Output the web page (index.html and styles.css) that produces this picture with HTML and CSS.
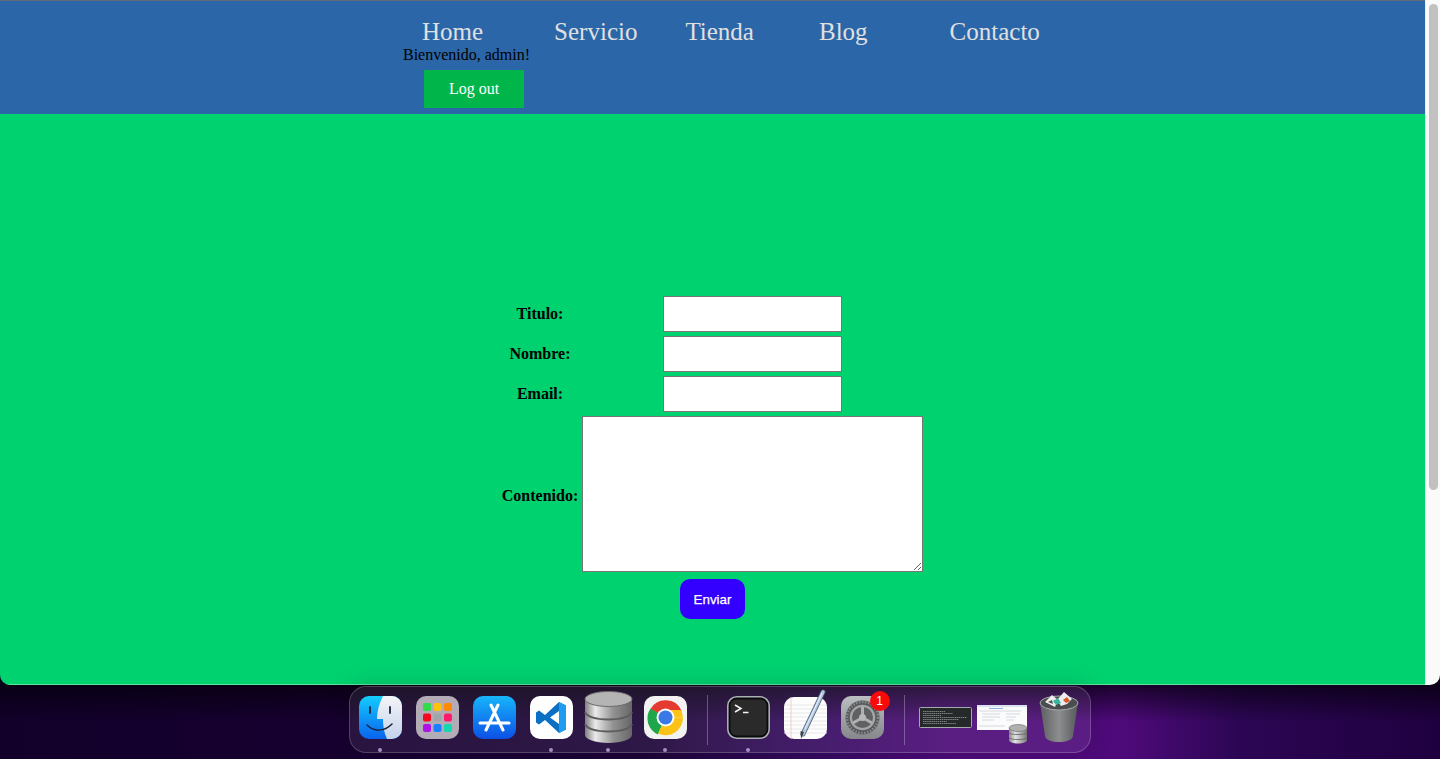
FILE: index.html
```html
<!DOCTYPE html>
<html lang="es">
<head>
<meta charset="utf-8">
<title>Contacto</title>
<link rel="stylesheet" href="styles.css">
</head>
<body>
<div class="window">
  <div class="page">
    <header class="site-header">
      <nav class="nav">
        <a class="nav-link nav-home" href="#">Home</a>
        <a class="nav-link nav-servicio" href="#">Servicio</a>
        <a class="nav-link nav-tienda" href="#">Tienda</a>
        <a class="nav-link nav-blog" href="#">Blog</a>
        <a class="nav-link nav-contacto" href="#">Contacto</a>
      </nav>
      <div class="user">
        <div class="welcome">Bienvenido, admin!</div>
        <a class="logout" href="#">Log out</a>
      </div>
    </header>
    <main class="content">
      <form class="entry-form">
        <table class="form-table">
          <tr><th>Titulo:</th><td><input class="field" type="text"></td></tr>
          <tr><th>Nombre:</th><td><input class="field" type="text"></td></tr>
          <tr><th>Email:</th><td><input class="field" type="text"></td></tr>
          <tr><th class="area-label">Contenido:</th><td><textarea class="area"></textarea></td></tr>
        </table>
        <button class="send" type="button">Enviar</button>
      </form>
    </main>
  </div>
  <div class="scrollbar"><div class="thumb"></div></div>
</div>

<div class="dock">
  <div class="app running">
    <svg viewBox="0 0 43 43" width="43" height="43">
      <defs>
        <linearGradient id="fa" x1="0" y1="0" x2="0" y2="1"><stop offset="0" stop-color="#14cdfd"/><stop offset="1" stop-color="#0a62ee"/></linearGradient>
        <linearGradient id="fb" x1="0" y1="0" x2="0" y2="1"><stop offset="0" stop-color="#f4f5f7"/><stop offset="1" stop-color="#c5d3ea"/></linearGradient>
      </defs>
      <rect width="43" height="43" rx="10" fill="url(#fa)"/>
      <path d="M24 0h9a10 10 0 0 1 10 10v23a10 10 0 0 1-10 10H28c-3-6-4-13-4-20h-6c0-8 2-15 6-23z" fill="url(#fb)"/>
      <path d="M11 11v6M31 11v6" stroke="#17233f" stroke-width="1.800" stroke-linecap="round"/>
      <path d="M8 29c7 7 17 7 25-1" fill="none" stroke="#17233f" stroke-width="1.500" stroke-linecap="round"/>
    </svg>
  </div>
  <div class="app">
    <svg viewBox="0 0 43 43" width="43" height="43">
      <rect width="43" height="43" rx="10" fill="#b3abb6"/>
      <rect x="7" y="7" width="8" height="8" rx="2" fill="#2fdc4a"/><rect x="17.500" y="7" width="8" height="8" rx="2" fill="#ffc30b"/><rect x="28" y="7" width="8" height="8" rx="2" fill="#ff8a00"/>
      <rect x="7" y="17.500" width="8" height="8" rx="2" fill="#f8081c"/><rect x="17.500" y="17.500" width="8" height="8" rx="2" fill="#a3a6a6"/><rect x="28" y="17.500" width="8" height="8" rx="2" fill="#ff1a6d"/>
      <rect x="7" y="28" width="8" height="8" rx="2" fill="#b010e8"/><rect x="17.500" y="28" width="8" height="8" rx="2" fill="#1a80ff"/><rect x="28" y="28" width="8" height="8" rx="2" fill="#10d8b0"/>
    </svg>
  </div>
  <div class="app">
    <svg viewBox="0 0 43 43" width="43" height="43">
      <defs><linearGradient id="as" x1="0" y1="0" x2="0" y2="1"><stop offset="0" stop-color="#17b5fb"/><stop offset="1" stop-color="#0c50e6"/></linearGradient></defs>
      <rect width="43" height="43" rx="10" fill="url(#as)"/>
      <path d="M25 9 13 34M18 9l12 25M7 27h29" fill="none" stroke="#fff" stroke-width="3" stroke-linecap="round"/>
    </svg>
  </div>
  <div class="app running">
    <svg viewBox="0 0 43 43" width="43" height="43">
      <rect width="43" height="43" rx="10" fill="#fff"/>
      <path d="M29 6 36 9.500V33.500L29 37 15 24 9 28.500 6 26.500V16.500L9 14.500l6 4.500zM29 15 20 21.500 29 28z" fill="#0b6fc4" fill-rule="evenodd"/>
      <path d="M29 6 36 9.500V33.500L29 37z" fill="#1f9cf0"/>
    </svg>
  </div>
  <div class="app app-db running">
    <svg viewBox="0 0 49 52" width="49" height="52">
      <defs>
        <linearGradient id="db" x1="0" y1="0" x2="1" y2="0"><stop offset="0" stop-color="#808080"/><stop offset=".22" stop-color="#eaeaea"/><stop offset=".6" stop-color="#929292"/><stop offset="1" stop-color="#666"/></linearGradient>
      </defs>
      <path d="M1 8v36c0 4 10 8 23.500 8S48 48 48 44V8z" fill="url(#db)"/>
      <ellipse cx="24.500" cy="8" rx="23.500" ry="7.500" fill="#b4b4b4" stroke="#6a6a6a"/>
      <path d="M1 21c2 5 12 7.500 23.500 7.500S46 26 48 21M1 33c2 5 12 7.500 23.500 7.500S46 38 48 33" fill="none" stroke="#5e5e5e" stroke-width="2"/>
    </svg>
  </div>
  <div class="app running">
    <svg viewBox="0 0 43 43" width="43" height="43">
      <rect width="43" height="43" rx="10" fill="#f3f2f2"/>
      <path d="M21.500 21.500 6.500 13a17.500 17.500 0 0 1 31 1.500z" fill="#e53a30"/>
      <path d="M21.500 21.500 14 38.500A17.500 17.500 0 0 1 6.500 12.500z" fill="#1fa64a"/>
      <path d="M21.500 21.500H39A17.500 17.500 0 0 1 14 37.500z" fill="#fcc316"/>
      <path d="M21.500 14H37.400L39 21.500H28z" fill="#fcc316"/>
      <circle cx="21.500" cy="21.500" r="9" fill="#fff"/>
      <circle cx="21.500" cy="21.500" r="7" fill="#3b78e7"/>
    </svg>
  </div>
  <div class="separator"></div>
  <div class="app running">
    <svg viewBox="0 0 43 43" width="43" height="43">
      <rect x=".8" y=".8" width="41.400" height="41.400" rx="9" fill="#0b0b0b" stroke="#a9b0b2" stroke-width="1.600"/>
      <rect x="3.500" y="3.500" width="36" height="36" rx="6" fill="#2a2a2a"/>
      <path d="M8 9l6 3.500-6 3.500M16 16.500h5.500" fill="none" stroke="#f4f4f4" stroke-width="1.500"/>
    </svg>
  </div>
  <div class="app">
    <svg viewBox="0 0 43 43" width="43" height="43">
      <rect y="1" width="43" height="42" rx="10" fill="#fdfdfd"/>
      <path d="M0 9h43M0 13h43M0 17h43M0 21h43M0 25h43M0 29h43M0 33h43M0 37h43" stroke="#e4e2e2" stroke-width=".8"/>
      <path d="M7 1v42" stroke="#f3c2be" stroke-width=".8"/>
      <path d="M39-4 19 38" stroke="#55677c" stroke-width="5" stroke-linecap="round"/>
      <path d="M39-4 19 38" stroke="#b3c8e2" stroke-width="3.200" stroke-linecap="round"/>
      <path d="M38-3 21 33" stroke="#eef3f9" stroke-width="1"/>
      <path d="M20 36 17 43l-.500-8z" fill="#3a4048"/>
    </svg>
  </div>
  <div class="app app-prefs">
    <svg viewBox="0 0 43 43" width="43" height="43">
      <defs><linearGradient id="sp" x1="0" y1="0" x2="0" y2="1"><stop offset="0" stop-color="#bbbfc2"/><stop offset="1" stop-color="#85878a"/></linearGradient></defs>
      <rect width="43" height="43" rx="10" fill="url(#sp)"/>
      <circle cx="21.500" cy="21.500" r="17" fill="#56585a"/>
      <circle cx="21.500" cy="21.500" r="15.500" fill="none" stroke="#898b8d" stroke-width="2.500" stroke-dasharray="1.500 1.500"/>
      <circle cx="21.500" cy="21.500" r="12.800" fill="#a4a6a8"/>
      <circle cx="21.500" cy="21.500" r="10.500" fill="#5f6163"/>
      <path d="M21.500 21.500V11M21.500 21.500l9.500 5.500M21.500 21.500 12 27" stroke="#aeb0b2" stroke-width="3"/>
      <circle cx="21.500" cy="21.500" r="3.500" fill="#b6b8ba"/>
    </svg>
    <span class="badge">1</span>
  </div>
  <div class="separator separator-two"></div>
  <div class="thumb-term">
    <svg viewBox="0 0 53 21" width="53" height="21">
      <rect x=".5" y=".5" width="52" height="20" rx="1" fill="#26292a" stroke="#a4aaaa"/>
      <path d="M4 4.500h22M4 6.500h30M4 8.500h18M4 10.500h44M4 12.500h36M4 14.500h24M4 16.500h33" stroke="#959c98" stroke-width=".8" stroke-dasharray="1.500 .6"/>
    </svg>
  </div>
  <div class="thumb-app">
    <svg viewBox="0 0 52 39" width="52" height="39">
      <defs><linearGradient id="mdb" x1="0" y1="0" x2="1" y2="0"><stop offset="0" stop-color="#8a8a8a"/><stop offset=".35" stop-color="#e4e4e4"/><stop offset="1" stop-color="#777"/></linearGradient></defs>
      <rect y="0" width="50" height="25" fill="#fbfbfb"/>
      <rect y="0" width="50" height="2" fill="#d8e2f0"/>
      <path d="M12 3.500h14" stroke="#8fb4e4" stroke-width="1"/>
      <path d="M2 6h42M5 9h18M29 9h14M5 12h18M29 12h10M5 15h12M29 15h8M2 21h26" stroke="#d0d6de" stroke-width=".9"/>
      <path d="M32 23v12c0 2 4 3.500 9 3.500s9-1.500 9-3.500V23z" fill="url(#mdb)"/>
      <ellipse cx="41" cy="23" rx="9" ry="3.500" fill="#b0b0b0" stroke="#6a6a6a" stroke-width=".6"/>
      <path d="M32 28c2 2 16 2 18 0M32 33c2 2 16 2 18 0" fill="none" stroke="#5f5f5f" stroke-width=".8"/>
    </svg>
  </div>
  <div class="trash">
    <svg viewBox="0 0 40 50" width="40" height="50">
      <defs><linearGradient id="tr" x1="0" y1="0" x2="1" y2="0"><stop offset="0" stop-color="#5c5e60"/><stop offset=".5" stop-color="#8c8e90"/><stop offset="1" stop-color="#55585a"/></linearGradient></defs>
      <path d="M1 11 6 44c.500 4 7 6 14 6s13.500-2 14-6L39 11z" fill="url(#tr)"/>
      <ellipse cx="20" cy="11" rx="19" ry="7" fill="#4a4c4e" stroke="#a8aaac"/>
      <path d="M6 10 13 3l6 5-3 7zM18 8l7-8 8 7-5 5-6 2z" fill="#ececec"/>
      <path d="M14 9l5-3 3 5-5 2z" fill="#3bb59a"/>
      <path d="M24 8l4-3 3 4-4 2z" fill="#d8582e"/>
      <path d="M9 10l4-2 1 4z" fill="#555"/>
    </svg>
  </div>
</div>
</body>
</html>
```

FILE: styles.css
```css
* { box-sizing: border-box; }

html, body {
  margin: 0;
  height: 759px;
  overflow: hidden;
}

body {
  display: flex;
  flex-direction: column;
  align-items: center;
  font-family: "Liberation Serif", serif;
  background:
    linear-gradient(180deg, rgba(5, 0, 12, 0.7) 685px, rgba(5, 0, 12, 0) 722px),
    linear-gradient(90deg, #12002a 0%, #170030 24%, #1d0538 45%, #340a5e 56%, #4c0b78 66%, #4e0a7a 78%, #2c0654 86%, #1f003f 100%);
}

.window {
  flex: none;
  align-self: stretch;
  display: flex;
  height: 685px;
  border-radius: 0 0 10px 10px;
  overflow: hidden;
}

.page {
  flex: 1;
  display: flex;
  flex-direction: column;
  min-width: 0;
  background: #00d270;
  border-bottom: 1px solid #5fe39f;
}

.site-header {
  flex: none;
  height: 114px;
  padding: 17px 0 0 403px;
  background: #2a66a8;
  border-top: 1px solid #5f6a76;
}

.nav {
  display: flex;
  height: 28px;
}

.nav-link {
  font-size: 25px;
  line-height: 28px;
  color: #e0e0e0;
  text-decoration: none;
}

.nav-home { margin-left: 19px; }
.nav-servicio { margin-left: 71px; }
.nav-tienda { margin-left: 48px; }
.nav-blog { margin-left: 65px; }
.nav-contacto { margin-left: 82px; }

.welcome {
  font-size: 16px;
  line-height: 18px;
  color: #000;
}

.logout {
  display: block;
  width: 100px;
  height: 38px;
  margin: 6px 0 0 21px;
  background: #00b64b;
  color: #fff;
  font-size: 16px;
  line-height: 38px;
  text-align: center;
  text-decoration: none;
}

.content {
  flex: 1;
  padding-top: 178px;
}

.entry-form {
  display: flex;
  flex-direction: column;
  align-items: center;
}

.form-table {
  border-collapse: separate;
  border-spacing: 4px;
}

.form-table th {
  padding: 0;
  font-size: 16px;
  font-weight: bold;
  color: #000;
  text-align: center;
  vertical-align: middle;
}

.form-table .area-label { padding-top: 4px; }

.form-table td {
  padding: 0;
  text-align: center;
  vertical-align: middle;
}

.field {
  display: block;
  width: 179px;
  height: 36px;
  margin: 0 auto;
  background: #fff;
  border: 1px solid #767676;
  border-radius: 0;
}

.area {
  display: block;
  width: 341px;
  height: 156px;
  margin: 0;
  background: #fff;
  border: 1px solid #767676;
  border-radius: 0;
}

.send {
  width: 65px;
  height: 40px;
  margin-top: 3px;
  padding: 0;
  border: 0;
  border-radius: 10px;
  background: #3300ff;
  color: #fff;
  font-family: "Liberation Sans", sans-serif;
  font-size: 13.330px;
  -webkit-text-stroke: 0.25px #fff;
}

.scrollbar {
  flex: none;
  width: 15px;
  padding: 4px 3px;
  background: #fafafa;
  border-left: 1px solid #ececec;
}

.thumb {
  width: 9px;
  height: 486px;
  border-radius: 5px;
  background: #c1c1c1;
}

.dock {
  flex: none;
  display: flex;
  align-items: flex-start;
  width: 742px;
  height: 67px;
  margin: 1px 1px 0 0;
  padding: 9px 0 0 9px;
  border: 1px solid rgba(255, 255, 255, 0.2);
  border-radius: 17px;
  background: rgba(255, 255, 255, 0.08);
  box-shadow: 0 -2px 24px rgba(0, 0, 0, 0.14);
}

.app {
  flex: none;
  position: relative;
  width: 43px;
  height: 43px;
  margin-right: 14px;
}

.app svg { display: block; overflow: visible; }

.app-db {
  width: 49px;
  height: 52px;
  margin: -5px 11px 0 -3px;
}

.running::after {
  content: "";
  position: absolute;
  left: 50%;
  top: 52px;
  width: 4px;
  height: 4px;
  margin-left: -2px;
  border-radius: 50%;
  background: #a58fc4;
}

.app-db.running::after { top: 57px; }

.separator {
  flex: none;
  width: 1px;
  height: 50px;
  margin: -1px 19px 0 6px;
  background: rgba(255, 255, 255, 0.28);
}

.separator-two {
  margin: -1px 14px 0 6px;
}

.badge {
  position: absolute;
  top: -5px;
  right: -6px;
  width: 20px;
  height: 20px;
  border-radius: 50%;
  background: #f80a0a;
  color: #fff;
  font-family: "Liberation Sans", sans-serif;
  font-size: 12px;
  line-height: 20px;
  text-align: center;
}

.thumb-term {
  flex: none;
  width: 53px;
  height: 21px;
  margin: 11px 5px 0 0;
}

.thumb-app {
  flex: none;
  width: 52px;
  height: 39px;
  margin: 9px 10px 0 0;
}

.trash {
  flex: none;
  width: 40px;
  height: 50px;
  margin-top: -4px;
}

.thumb-term svg, .thumb-app svg, .trash svg { display: block; }
```
